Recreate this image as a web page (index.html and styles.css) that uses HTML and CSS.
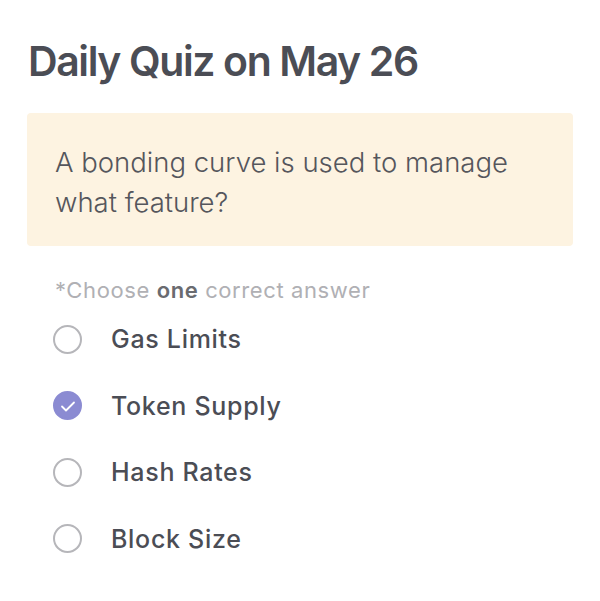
FILE: index.html
```html
<!DOCTYPE html>
<html lang="en">
<head>
  <meta charset="UTF-8">
  <title>Daily Quiz</title>
  <meta name="viewport" content="width=device-width, initial-scale=1.0">
  <link rel="stylesheet" href="styles.css">
</head>
<body>
  <div class="quiz">
    <h1 class="quiz-title">Daily Quiz on May 26</h1>
    <div class="question">A bonding curve is used to manage what feature?</div>
    <p class="hint">*Choose <b>one</b> correct answer</p>
    <ul class="options">
      <li class="option"><span class="radio"></span>Gas Limits</li>
      <li class="option checked">
        <span class="radio">
          <svg class="tick" viewBox="0 0 20 20" width="20" height="20"><path d="M4 10.5l4 4L16 6.5" fill="none" stroke="#fff" stroke-width="1.8" stroke-linecap="round" stroke-linejoin="round"/></svg>
        </span>Token Supply
      </li>
      <li class="option"><span class="radio"></span>Hash Rates</li>
      <li class="option"><span class="radio"></span>Block Size</li>
    </ul>
  </div>
</body>
</html>
```

FILE: styles.css
```css
body { margin:0; background:#fff; font-family:Inter,'Noto Sans',sans-serif; color:#4b4d55; }
.quiz { padding:36px 27px 0 27px; }
.quiz-title { margin:0 0 27px 1px; font-size:41px; font-weight:600; letter-spacing:-1.4px; line-height:50px; }
.question { background:#fdf3e1; border-radius:4px; padding:29px 40px 24px 28px; font-size:27.5px; font-weight:300; line-height:40px; color:#55565c; }
.hint { margin:31px 0 3px 28px; font-size:22px; letter-spacing:0.6px; color:#b0b0b4; line-height:26px; }
.hint b { color:#6a6b70; font-weight:600; }
.options { list-style:none; margin:0; padding:0 0 0 26px; }
.option { display:flex; align-items:center; height:66.5px; font-size:25px; letter-spacing:0.7px; font-weight:500; color:#4b4d55; }
.radio { width:29px; height:29px; box-sizing:border-box; border:2px solid #b6b6ba; border-radius:50%; margin-right:29px; display:flex; align-items:center; justify-content:center; flex-shrink:0; }
.checked .radio { background:#8b8bd2; border-color:#8b8bd2; }
.tick { display:block; flex-shrink:0; }
```
